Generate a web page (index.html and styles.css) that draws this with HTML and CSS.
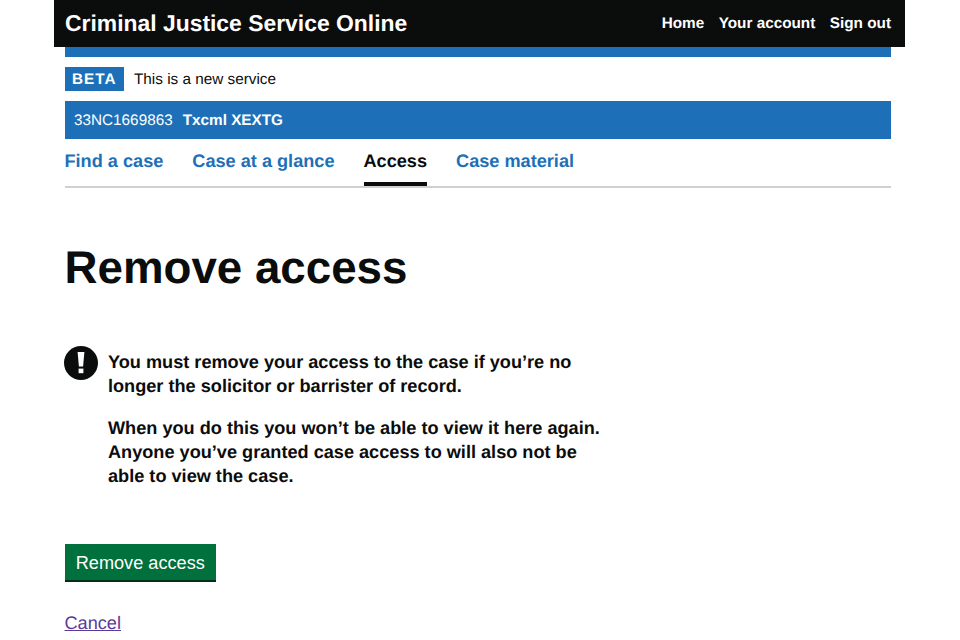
FILE: index.html
```html
<!DOCTYPE html>
<html lang="en">
<head>
<meta charset="utf-8">
<title>Remove access</title>
<link rel="stylesheet" href="styles.css">
</head>
<body>
<div class="page">
  <header class="site-header">
    <a class="site-title" href="#">Criminal Justice Service Online</a>
    <nav class="account-nav">
      <a href="#">Home</a>
      <a href="#">Your account</a>
      <a href="#">Sign out</a>
    </nav>
  </header>
  <div class="content">
    <div class="top-bar"></div>
    <div class="phase">
      <strong class="phase-tag">BETA</strong>
      <span>This is a new service</span>
    </div>
    <div class="case-bar">
      <span>33NC1669863</span>
      <strong>Txcml XEXTG</strong>
    </div>
    <nav class="tabs">
      <a href="#">Find a case</a>
      <a href="#">Case at a glance</a>
      <a href="#" class="active">Access</a>
      <a href="#">Case material</a>
    </nav>
    <main>
      <h1>Remove access</h1>
      <div class="warning">
        <svg class="warning-icon" width="34" height="34" viewBox="0 0 34 34" aria-hidden="true">
          <circle cx="17" cy="17" r="17" fill="#0b0c0c"/>
          <path d="M13.6 6h6.8l-1.3 14.5h-4.2z" fill="#fff"/>
          <rect x="14.6" y="22.6" width="4.8" height="4.6" fill="#fff"/>
        </svg>
        <div class="warning-text">
          <p>You must remove your access to the case if you’re no longer the solicitor or barrister of record.</p>
          <p>When you do this you won’t be able to view it here again. Anyone you’ve granted case access to will also not be able to view the case.</p>
        </div>
      </div>
      <button class="button" type="button">Remove access</button>
      <a class="cancel" href="#">Cancel</a>
    </main>
  </div>
</div>
</body>
</html>
```
FILE: styles.css
```css
* { box-sizing: border-box; }
html, body { margin: 0; padding: 0; background: #fff; }
body {
  font-family: "Liberation Sans", Arial, sans-serif;
  color: #0b0c0c;
  height: 640px;
  overflow: hidden;
  text-rendering: geometricPrecision;
}
.page { width: 851px; margin-left: 54px; }
.site-header {
  height: 47px;
  background: #0b0c0c;
  display: flex;
  justify-content: space-between;
  padding: 0 14px 0 11px;
  align-items: center;
}
.site-title {
  color: #fff;
  font-size: 22.9px;
  font-weight: 700;
  text-decoration: none;
}
.account-nav { display: flex; gap: 14.5px; }
.account-nav a {
  color: #fff;
  font-size: 15.3px;
  font-weight: 700;
  text-decoration: none;
}
.content { margin: 0 14.5px 0 10.5px; }
.top-bar { height: 10px; background: #1d70b8; }
.phase {
  display: flex;
  align-items: center;
  gap: 10px;
  height: 43.5px;
  font-size: 15.3px;
}
.phase-tag {
  background: #1d70b8;
  color: #fff;
  width: 59.5px;
  height: 24px;
  line-height: 25px;
  text-align: center;
  font-size: 15.3px;
  letter-spacing: 1px;
}
.phase span { padding-top: 2px; }
.case-bar {
  height: 38.5px;
  background: #1d70b8;
  color: #fff;
  font-size: 15.3px;
  display: flex;
  align-items: center;
  gap: 10px;
  padding: 2px 0 0 9.5px;
}
.tabs {
  display: flex;
  gap: 29px;
  height: 49px;
  border-bottom: 2px solid #d0d0d0;
}
.tabs a {
  color: #1d70b8;
  font-size: 18.15px;
  font-weight: 700;
  text-decoration: none;
  line-height: 44px;
  height: 47px;
}
.tabs a.active { color: #0b0c0c; border-bottom: 4px solid #0b0c0c; }
h1 {
  margin: 51px 0 49px;
  font-size: 45.7px;
  line-height: 58px;
  font-weight: 700;
}
.warning { display: flex; gap: 10px; width: 540px; }
.warning-icon { flex: none; margin-left: -0.5px; }
.warning-text { padding-top: 4px; font-size: 18.15px; font-weight: 700; line-height: 24px; }
.warning-text p { margin: 0 0 18px; }
.button {
  display: block;
  margin-top: 38px;
  height: 38px;
  width: 151.5px;
  background: #00703c;
  color: #fff;
  border: 0;
  border-bottom: 2px solid #002d18;
  font-family: inherit;
  font-size: 18.15px;
  padding: 2px 0 0;
}
.cancel {
  display: inline-block;
  margin-top: 30.5px;
  color: #5a3a9a;
  font-size: 18.15px;
}
```
